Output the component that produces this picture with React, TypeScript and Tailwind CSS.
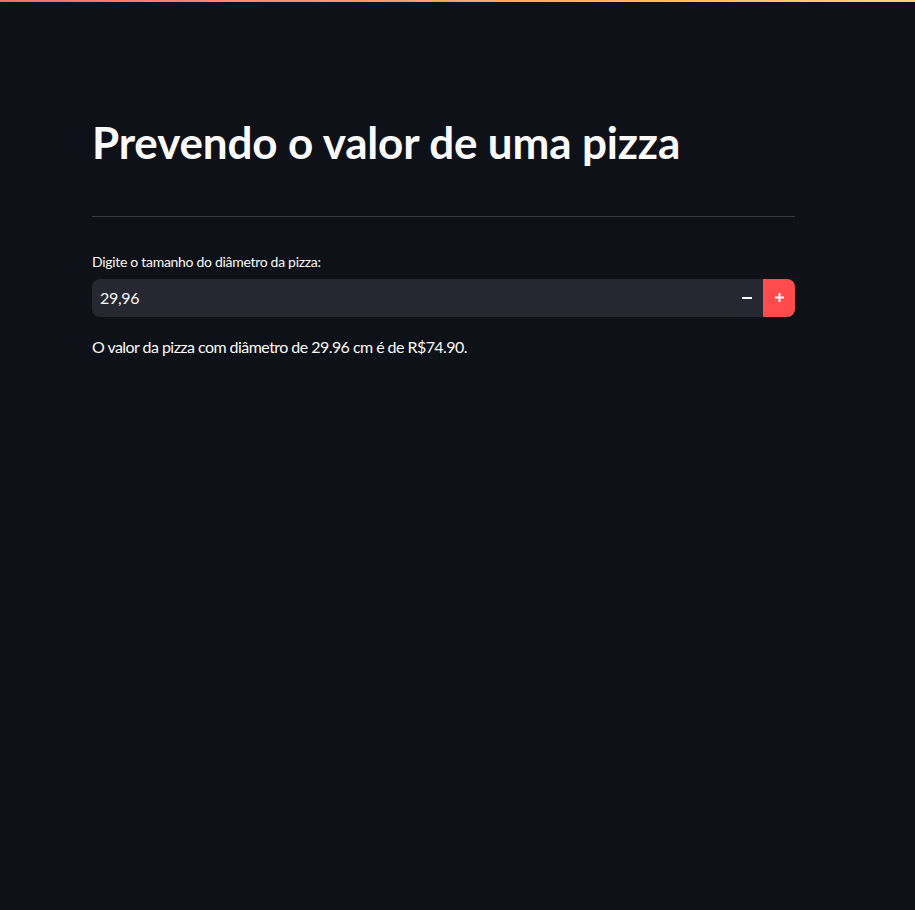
export default function App() {
  return (
    <div className="min-h-screen w-full bg-[#0e1117] text-[#fafafa]" style={{ fontFamily: 'Lato, "Noto Sans", sans-serif' }}>
      <div className="h-[2px] w-full bg-gradient-to-r from-[#ff6e5a] to-[#ffd56a]" />
      <div className="ml-[92px] w-[703px] pt-[114px]">
        <h1 className="text-[44px] font-bold leading-[1.2] tracking-[-0.15px]">Prevendo o valor de uma pizza</h1>
        <div className="mt-[47px] h-px w-full bg-[#3a3c45]" />
        <label className="mt-[35px] block text-[14px] leading-[20px] tracking-[-0.3px]">Digite o tamanho do diâmetro da pizza:</label>
        <div className="mt-[7px] flex h-[38px] w-full overflow-hidden rounded-lg bg-[#262730]">
          <div className="flex flex-1 items-center pl-[8px] text-[16px] tracking-[-0.3px]">29,96</div>
          <button className="flex w-[32px] items-center justify-center">
            <svg width="10" height="10" viewBox="0 0 10 10"><rect x="0" y="4" width="10" height="2" fill="#fafafa" /></svg>
          </button>
          <button className="flex w-[32px] items-center justify-center bg-[#ff4b4b]">
            <svg width="9" height="9" viewBox="0 0 9 9"><rect x="0" y="3.5" width="9" height="2" fill="#fafafa" /><rect x="3.5" y="0" width="2" height="9" fill="#fafafa" /></svg>
          </button>
        </div>
        <p className="mt-[18px] text-[16px] leading-[24px] tracking-[-0.55px]">O valor da pizza com diâmetro de 29.96 cm é de R$74.90.</p>
      </div>
    </div>
  );
}
